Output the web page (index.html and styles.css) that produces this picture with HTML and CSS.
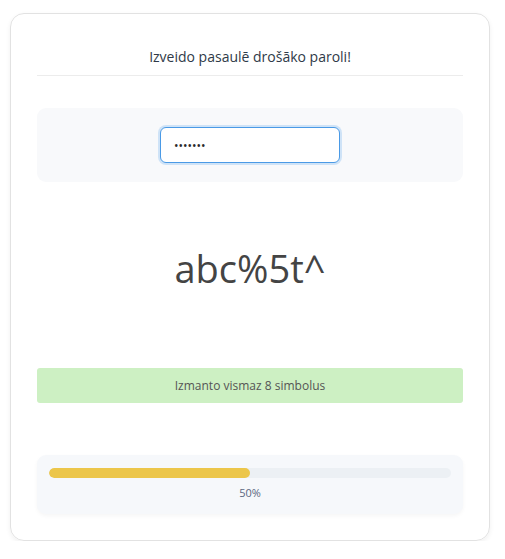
FILE: index.html
```html
<!DOCTYPE html>
<html lang="lv">
<head>
<meta charset="utf-8">
<title>Parole</title>
<link rel="stylesheet" href="styles.css">
</head>
<body>
<div class="card">
  <div class="header">Izveido pasaulē drošāko paroli!</div>
  <div class="input-box">
    <input class="pwd" type="password" value="abc%5t^" autofocus>
  </div>
  <div class="display">abc%5t^</div>
  <div class="rule">Izmanto vismaz 8 simbolus</div>
  <div class="progress-box">
    <div class="track"><div class="fill" style="width: 50%"></div></div>
    <div class="percent">50%</div>
  </div>
</div>
</body>
</html>
```
FILE: styles.css
```css
html, body {
  margin: 0;
  padding: 0;
  background: #ffffff;
}
body {
  font-family: "Open Sans", "Noto Sans", sans-serif;
  padding: 13px 0 0 10px;
}
.card {
  box-sizing: border-box;
  width: 480px;
  height: 528px;
  border: 1px solid #e2e2e2;
  border-radius: 14px;
  padding: 26px 26px;
  box-shadow: 0 2px 5px rgba(0,0,0,0.06);
  display: flex;
  flex-direction: column;
}
.header {
  text-align: center;
  font-size: 14px;
  line-height: 20px;
  color: #2f3a48;
  padding: 7px 0 8px;
  border-bottom: 1px solid #ececec;
}
.input-box {
  margin-top: 32px;
  background: #f8f9fb;
  border-radius: 9px;
  height: 74px;
  display: flex;
  align-items: center;
  justify-content: center;
}
.pwd {
  box-sizing: border-box;
  width: 180px;
  height: 36px;
  border: 1px solid #4a9ae6;
  border-radius: 6px;
  box-shadow: 0 0 0 2px #cfe3f7;
  padding: 0 13px;
  font-family: "Open Sans", sans-serif;
  font-size: 12px;
  color: #2a2a2a;
  outline: none;
  background: #fff;
  letter-spacing: 0;
}
.display {
  text-align: center;
  font-size: 38px;
  line-height: 49px;
  color: #444444;
  margin-top: 62px;
  height: 49px;
}
.rule {
  margin-top: 75px;
  background: #cdf0c3;
  border-radius: 3px;
  height: 35px;
  display: flex;
  align-items: center;
  justify-content: center;
  font-size: 12px;
  color: #555555;
}
.progress-box {
  margin-top: 52px;
  background: #f6f8fb;
  border-radius: 9px;
  box-shadow: 0 2px 4px rgba(0,0,0,0.04);
  padding: 13px 12px 0;
  height: 59px;
  box-sizing: border-box;
}
.track {
  height: 10px;
  border-radius: 5px;
  background: #ecf0f4;
  overflow: hidden;
}
.fill {
  height: 100%;
  background: #ecc64a;
  border-radius: 5px;
}
.percent {
  text-align: center;
  font-size: 11px;
  line-height: 15px;
  margin-top: 7px;
  color: #5b6780;
}
```
